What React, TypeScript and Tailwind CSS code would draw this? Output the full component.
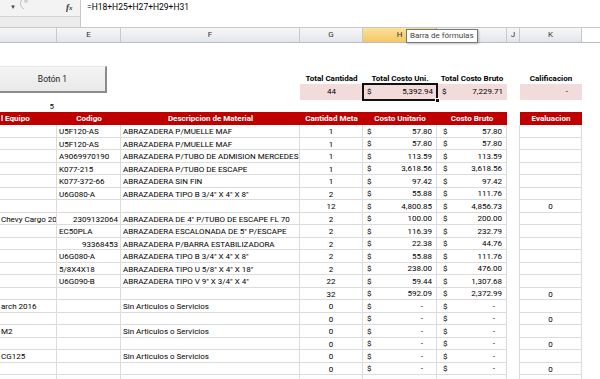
import React from 'react';

type R = { d?: string; e?: string; eR?: boolean; f?: string; g?: string; h?: string; i?: string; k?: string };

const rows: R[] = [
  { e: 'U5F120-AS', f: 'ABRAZADERA P/MUELLE MAF', g: '1', h: '57.80', i: '57.80' },
  { e: 'U5F120-AS', f: 'ABRAZADERA P/MUELLE MAF', g: '1', h: '57.80', i: '57.80' },
  { e: 'A9069970190', f: 'ABRAZADERA P/TUBO DE ADMISION MERCEDES', g: '1', h: '113.59', i: '113.59' },
  { e: 'K077-215', f: 'ABRAZADERA P/TUBO DE ESCAPE', g: '1', h: '3,618.56', i: '3,618.56' },
  { e: 'K077-372-66', f: 'ABRAZADERA SIN FIN', g: '1', h: '97.42', i: '97.42' },
  { e: 'U6G080-A', f: 'ABRAZADERA TIPO B 3/4" X 4" X 8"', g: '2', h: '55.88', i: '111.76' },
  { g: '12', h: '4,800.85', i: '4,856.73', k: '0' },
  { d: 'Chevy Cargo 2016', e: '2309132064', eR: true, f: 'ABRAZADERA DE 4" P/TUBO DE ESCAPE FL 70', g: '2', h: '100.00', i: '200.00' },
  { e: 'EC50PLA', f: 'ABRAZADERA ESCALONADA DE 5" P/ESCAPE', g: '2', h: '116.39', i: '232.79' },
  { e: '93368453', eR: true, f: 'ABRAZADERA P/BARRA ESTABILIZADORA', g: '2', h: '22.38', i: '44.76' },
  { e: 'U6G080-A', f: 'ABRAZADERA TIPO B 3/4" X 4" X 8"', g: '2', h: '55.88', i: '111.76' },
  { e: '5/8X4X18', f: 'ABRAZADERA TIPO U 5/8" X 4" X 18"', g: '2', h: '238.00', i: '476.00' },
  { e: 'U6G090-B', f: 'ABRAZADERA TIPO V 9" X 3/4" X 4"', g: '22', h: '59.44', i: '1,307.68' },
  { g: '32', h: '592.09', i: '2,372.99', k: '0' },
  { d: 'arch 2016', f: 'Sin Articulos o Servicios', g: '0', h: '-', i: '-' },
  { g: '0', h: '-', i: '-', k: '0' },
  { d: ' M2', f: 'Sin Articulos o Servicios', g: '0', h: '-', i: '-' },
  { g: '0', h: '-', i: '-', k: '0' },
  { d: 'CG125', f: 'Sin Articulos o Servicios', g: '0', h: '-', i: '-' },
  { g: '0', h: '-', i: '-', k: '0' },
  {},
];

function MoneyH({ v }: { v?: string }) {
  if (v === undefined) return null;
  return (
    <div className="flex h-full items-center justify-between pl-[4px] pr-[4px]">
      <span>$</span>
      <span className={v === '-' ? 'pr-[9px]' : ''}>{v}</span>
    </div>
  );
}

function MoneyI({ v }: { v?: string }) {
  if (v === undefined) return null;
  return (
    <div className="flex h-full items-center justify-between pl-[6px] pr-[4px]">
      <span>$</span>
      <span className={v === '-' ? 'pr-[7px]' : ''}>{v}</span>
    </div>
  );
}

const cell = 'shrink-0 overflow-hidden whitespace-nowrap border-b border-r border-[#dcdcdc] h-full pt-[1px]';

function DataRow({ r }: { r: R }) {
  return (
    <div className="flex h-[12.5px] leading-[11px]">
      <div className={`${cell} w-[57px] pl-[1px]`}>{r.d}</div>
      <div className={`${cell} w-[64px] px-[2px] ${r.eR ? 'text-right' : ''}`}>{r.e}</div>
      <div className={`${cell} w-[179px] pl-[2px]`}>{r.f}</div>
      <div className={`${cell} w-[63px] text-center`}>{r.g}</div>
      <div className={`${cell} w-[74px]`}><MoneyH v={r.h} /></div>
      <div className={`${cell} w-[70px]`}><MoneyI v={r.i} /></div>
      <div className="h-full w-[13px] shrink-0 border-r border-[#dcdcdc]"></div>
      <div className={`${cell} w-[62px] text-center`}>{r.k}</div>
    </div>
  );
}

export default function App() {
  return (
    <div className="relative h-[379px] w-[600px] overflow-hidden whitespace-nowrap bg-white text-[8px] text-black font-['Roboto',sans-serif]">
      {/* formula bar */}
      <div className="flex h-[28px] border-b border-[#c8c8c8]">
        <div className="flex w-[81px] shrink-0 flex-col border-r border-[#c8c8c8] bg-[#f3f3f3]">
          <div className="flex h-[17px] items-start border-b border-[#d4d4d4]">
            <span className="ml-[10px] mt-[2px] text-[6px] text-[#444]">▼</span>
            <svg width="10" height="12" viewBox="0 0 10 12" className="ml-[3px] -mt-[2px]">
              <path d="M5 0 A6 6 0 0 0 5 11" fill="none" stroke="#bdbdbd" strokeWidth="1" />
              <circle cx="7" cy="3" r="2" fill="#d0d0d0" />
            </svg>
            <span className="ml-[37px] mt-[1px] text-[9px] font-bold italic text-[#333] font-['Liberation_Serif',serif]">f<span className="text-[7px]">x</span></span>
          </div>
          <div className="flex-1 bg-[#ececec]"></div>
        </div>
        <div className="flex-1 bg-white pl-[6px] pt-[1px] text-[8.5px] leading-[13px]">=H18+H25+H27+H29+H31</div>
      </div>

      {/* column header */}
      <div className="flex h-[15px] border-b border-[#b9bec6] bg-gradient-to-b from-[#f6f7f9] to-[#e3e6ea] text-[8px] leading-[14px] text-[#303030]">
        <div className="w-[57px] shrink-0 border-r border-[#c6cacf]"></div>
        <div className="w-[64px] shrink-0 border-r border-[#c6cacf] text-center">E</div>
        <div className="w-[179px] shrink-0 border-r border-[#c6cacf] text-center">F</div>
        <div className="w-[63px] shrink-0 border-r border-[#c6cacf] text-center">G</div>
        <div className="w-[74px] shrink-0 border-r border-[#e0a83a] bg-gradient-to-b from-[#fbe19a] to-[#f4c862] text-center">H</div>
        <div className="w-[70px] shrink-0 border-r border-[#c6cacf] text-center">I</div>
        <div className="w-[13px] shrink-0 border-r border-[#c6cacf] text-center">J</div>
        <div className="w-[62px] shrink-0 border-r border-[#c6cacf] text-center">K</div>
        <div className="flex-1 bg-white"></div>
      </div>

      {/* tooltip */}
      <div className="absolute left-[406px] top-[29px] h-[14px] border border-[#767676] bg-white px-[3px] text-[8px] leading-[12px] text-[#444] shadow-[1px_1px_2px_rgba(0,0,0,0.25)]">
        Barra de fórmulas
      </div>

      {/* top area */}
      <div className="flex h-[69px]">
        <div className="flex w-[300px] shrink-0 flex-col">
          <div className="h-[23px]"></div>
          <div className="flex h-[27px] w-[107px] items-center justify-center border-b-2 border-r-2 border-t border-[#8c8c8c] border-t-[#e6e6e6] bg-gradient-to-b from-[#f4f4f4] to-[#e9e9e9] text-[8.5px] text-[#222]">
            Botón 1
          </div>
          <div className="h-[7px]"></div>
          <div className="h-[12px] w-[57px] pr-[3px] text-right leading-[13px]">5</div>
        </div>
        <div className="flex flex-col">
          <div className="h-[30px]"></div>
          <div className="flex h-[11px] font-bold leading-[11px]">
            <div className="w-[63px] text-center">Total Cantidad</div>
            <div className="w-[74px] text-center">Total Costo Uni.</div>
            <div className="w-[70px] text-center">Total Costo Bruto</div>
            <div className="w-[13px]"></div>
            <div className="w-[62px] text-center">Calificacion</div>
          </div>
          <div className="flex h-[16px] leading-[14px]">
            <div className="w-[63px] bg-[#f2dcdb] text-center leading-[16px]">44</div>
            <div className="relative w-[74px] bg-[#f2dcdb]">
              <div className="absolute -left-[1px] -top-[1px] flex h-[18px] w-[76px] items-center justify-between border-2 border-[#111] pl-[3px] pr-[3px]">
                <span>$</span>
                <span>5,392.94</span>
              </div>
              <div className="absolute -bottom-[3px] -right-[3px] h-[5px] w-[5px] border border-white bg-[#111]"></div>
            </div>
            <div className="flex w-[70px] items-center justify-between bg-[#f2dcdb] pl-[5px] pr-[4px]">
              <span>$</span>
              <span>7,229.71</span>
            </div>
            <div className="w-[13px]"></div>
            <div className="w-[62px] bg-[#f2dcdb] pr-[14px] text-right leading-[16px]">-</div>
          </div>
        </div>
      </div>

      {/* red header */}
      <div className="flex h-[13px] font-bold leading-[13px] text-white">
        <div className="flex w-[507px] shrink-0 bg-[#c00000]">
          <div className="w-[57px] shrink-0 overflow-hidden pl-[1px]">l Equipo</div>
          <div className="w-[64px] shrink-0 text-center">Codigo</div>
          <div className="w-[179px] shrink-0 text-center">Descripcion de Material</div>
          <div className="w-[63px] shrink-0 text-center">Cantidad Meta</div>
          <div className="w-[74px] shrink-0 text-center">Costo Unitario</div>
          <div className="w-[70px] shrink-0 text-center">Costo Bruto</div>
        </div>
        <div className="w-[13px] shrink-0"></div>
        <div className="w-[62px] shrink-0 bg-[#c00000] text-center">Evaluacion</div>
      </div>

      {/* data */}
      <div className="flex flex-col">
        {rows.map((r, idx) => (
          <DataRow key={idx} r={r} />
        ))}
      </div>
    </div>
  );
}
